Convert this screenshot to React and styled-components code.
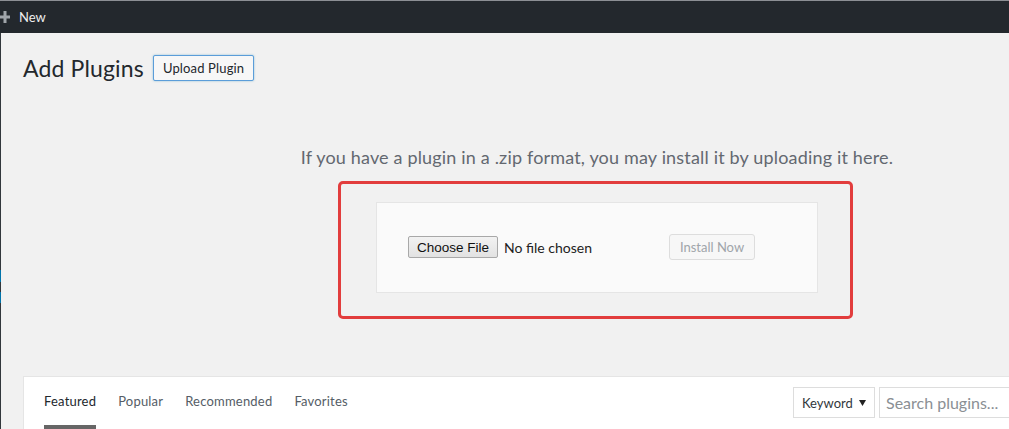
import React from "react";
import styled, { createGlobalStyle } from "styled-components";

const GlobalStyle = createGlobalStyle`
  html, body { margin: 0; padding: 0; }
  body {
    background: #f1f1f1;
    overflow: hidden;
    font-family: Lato, "Noto Sans", sans-serif;
  }
`;

const ui = `Lato, "Noto Sans", sans-serif`;

const Page = styled.div`
  width: 1009px;
  height: 429px;
  overflow: hidden;
  display: flex;
  flex-direction: column;
`;

const TopBar = styled.header`
  flex: none;
  height: 32px;
  border-top: 1px solid #8c8f94;
  background: #23282d;
  display: flex;
  align-items: center;
`;

const NewLink = styled.span`
  display: flex;
  align-items: center;
  gap: 9px;
  color: #eeeeee;
  font-family: ${ui};
  font-size: 13px;
  line-height: 1;
`;

const Main = styled.div`
  flex: 1;
  display: flex;
  min-height: 0;
`;

const LeftEdge = styled.div`
  flex: none;
  width: 1px;
  background: #32373c;
  display: flex;
  flex-direction: column;
`;

const EdgeMark = styled.span`
  display: block;
  height: ${(p) => p.$h}px;
  margin-top: ${(p) => p.$top}px;
  background: ${(p) => p.$color};
`;

const Wrap = styled.div`
  flex: none;
  width: 1148px;
  margin-left: 22px;
  display: flex;
  flex-direction: column;
`;

const TitleRow = styled.div`
  display: flex;
  align-items: center;
  margin-top: 22px;
  height: 26px;
`;

const Title = styled.h1`
  margin: 0 9px 0 0;
  font-family: ${ui};
  font-weight: 400;
  font-size: 23px;
  line-height: 29px;
  letter-spacing: 0.15px;
  color: #23282d;
`;

const TitleAction = styled.button`
  height: 26px;
  padding: 0 9px;
  border: 1px solid #5b9dd9;
  border-radius: 2px;
  background: #f7f7f7;
  box-shadow: 0 0 2px rgba(30, 140, 190, 0.5);
  color: #23282d;
  font-family: ${ui};
  font-size: 13px;
  letter-spacing: 0.15px;
  line-height: 24px;
`;

const Help = styled.p`
  margin: 64px 0 12px;
  text-align: center;
  font-family: ${ui};
  font-size: 18px;
  line-height: 24px;
  letter-spacing: 0.17px;
  color: #636870;
`;

const Highlight = styled.div`
  align-self: center;
  margin-left: -3px;
  border: 3px solid #e23d3d;
  border-radius: 5px;
  padding: 18px 32px 23px 35px;
`;

const UploadBox = styled.form`
  width: 378px;
  padding: 31px 31px 32px 31px;
  background: #fafafa;
  border: 1px solid #e5e5e5;
  display: flex;
  align-items: center;
  margin: 0;
`;

const FileControl = styled.div`
  width: 261px;
  display: flex;
  align-items: center;
`;

const ChooseButton = styled.span`
  box-sizing: border-box;
  height: 22px;
  width: 90px;
  display: flex;
  align-items: center;
  justify-content: center;
  border: 1px solid #a8a8a8;
  border-radius: 2px;
  background: linear-gradient(#f2f2f2, #e2e2e2);
  font-family: "Liberation Sans", Arial, sans-serif;
  font-size: 13.5px;
  color: #111;
`;

const NoFile = styled.span`
  margin-left: 6px;
  font-family: ${ui};
  font-size: 14px;
  color: #222;
`;

const InstallButton = styled.button`
  height: 26px;
  width: 86px;
  padding: 0;
  border: 1px solid #dddddd;
  border-radius: 3px;
  background: #f7f7f7;
  color: #a0a5aa;
  font-family: ${ui};
  font-size: 13px;
`;

const FilterBar = styled.div`
  margin-top: 57px;
  flex: 1;
  background: #fff;
  border: 1px solid #e5e5e5;
  border-bottom: none;
  display: flex;
  justify-content: space-between;
  align-items: flex-start;
  padding: 0 11px 0 9px;
`;

const Tabs = styled.ul`
  list-style: none;
  margin: 0;
  padding: 0;
  display: flex;
`;

const Tab = styled.li`
  margin: 0 11px;
  padding: 15px 0;
  border-bottom: 4px solid ${(p) => (p.$current ? "#666" : "#fff")};
  font-family: ${ui};
  font-size: 13px;
  line-height: 18px;
  letter-spacing: 0.2px;
  color: ${(p) => (p.$current ? "#23282d" : "#555d66")};
`;

const SearchGroup = styled.div`
  display: flex;
  gap: 4px;
  margin-top: 10px;
`;

const Select = styled.div`
  box-sizing: border-box;
  width: 82px;
  height: 31px;
  border: 1px solid #ddd;
  background: #fff;
  display: flex;
  align-items: center;
  justify-content: space-between;
  padding: 0 8px 0 8px;
  font-family: ${ui};
  font-size: 13px;
  color: #32373c;
`;

const Caret = () => (
  <svg width="7" height="6" viewBox="0 0 7 6" aria-hidden="true">
    <path d="M0 0h7L3.5 6z" fill="#222" />
  </svg>
);

const SearchInput = styled.div`
  box-sizing: border-box;
  width: 280px;
  height: 31px;
  border: 1px solid #ddd;
  background: #fff;
  display: flex;
  align-items: center;
  padding: 0 6px;
  font-family: ${ui};
  font-size: 16px;
  color: #8a8f94;
`;

const PlusIcon = () => (
  <svg width="10" height="14" viewBox="2.5 0 10 14" aria-hidden="true">
    <path d="M6 1h3v4.5h4.5v3H9V13H6V8.5H1.5v-3H6z" fill="#a0a5aa" />
  </svg>
);

export default function App() {
  return (
    <>
      <GlobalStyle />
      <Page>
        <TopBar>
          <NewLink>
            <PlusIcon />
            New
          </NewLink>
        </TopBar>
        <Main>
          <LeftEdge>
            <EdgeMark $top={237} $h={12} $color="#0073aa" />
            <EdgeMark $top={10} $h={11} $color="#0073aa" />
          </LeftEdge>
          <Wrap>
            <TitleRow>
              <Title>Add Plugins</Title>
              <TitleAction>Upload Plugin</TitleAction>
            </TitleRow>
            <Help>
              If you have a plugin in a .zip format, you may install it by uploading it here.
            </Help>
            <Highlight>
              <UploadBox onSubmit={(e) => e.preventDefault()}>
                <FileControl>
                  <ChooseButton>Choose File</ChooseButton>
                  <NoFile>No file chosen</NoFile>
                </FileControl>
                <InstallButton type="button" disabled>
                  Install Now
                </InstallButton>
              </UploadBox>
            </Highlight>
            <FilterBar>
              <Tabs>
                <Tab $current>Featured</Tab>
                <Tab>Popular</Tab>
                <Tab>Recommended</Tab>
                <Tab>Favorites</Tab>
              </Tabs>
              <SearchGroup>
                <Select>
                  Keyword
                  <Caret />
                </Select>
                <SearchInput>Search plugins...</SearchInput>
              </SearchGroup>
            </FilterBar>
          </Wrap>
        </Main>
      </Page>
    </>
  );
}
